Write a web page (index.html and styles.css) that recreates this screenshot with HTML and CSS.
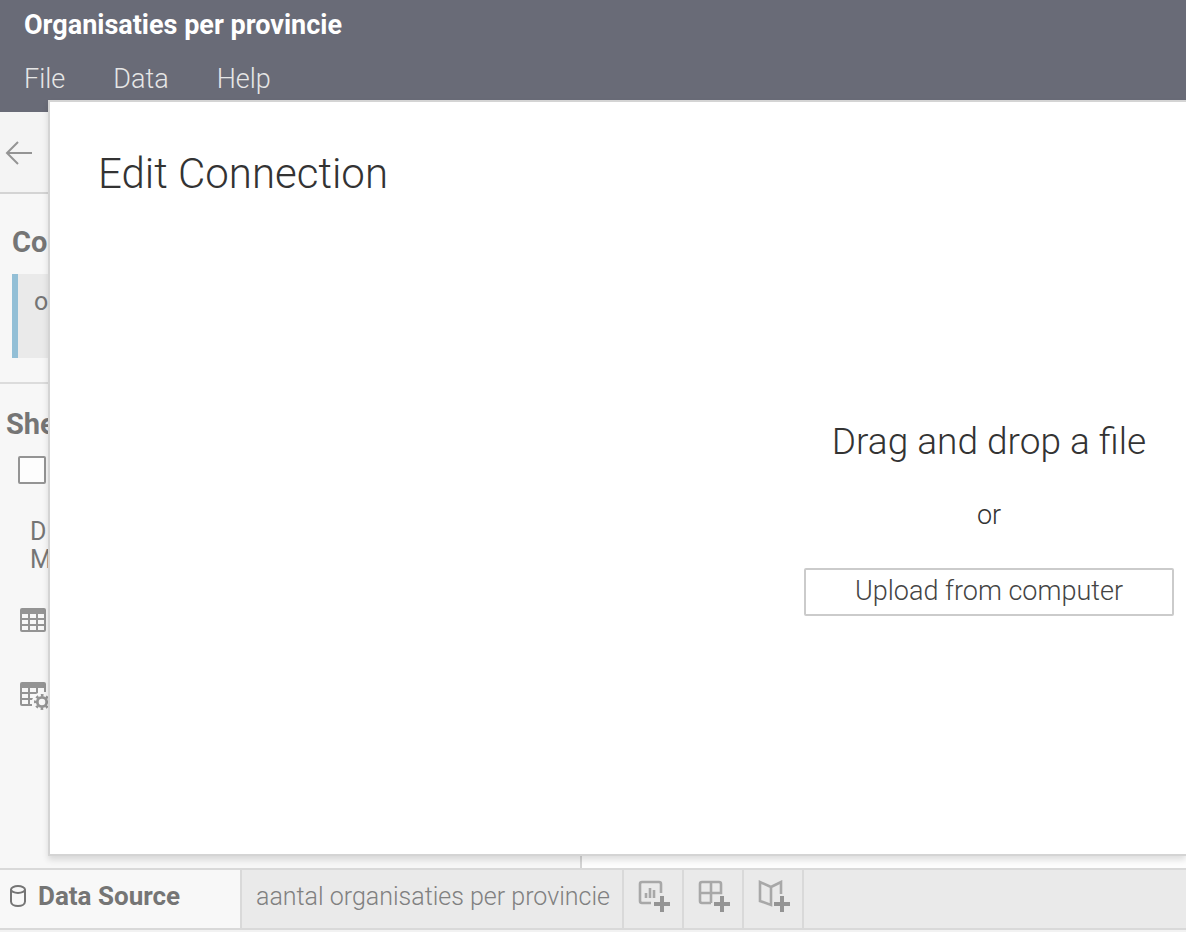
FILE: index.html
```html
<!DOCTYPE html>
<html lang="en">
<head>
  <meta charset="utf-8">
  <meta name="viewport" content="width=device-width, initial-scale=1">
  <title>Organisaties per provincie</title>
  <link rel="stylesheet" href="styles.css">
</head>
<body>

  <header class="topbar">
    <h1>Organisaties per provincie</h1>
    <nav class="menu">
      <button type="button">File</button>
      <button type="button">Data</button>
      <button type="button">Help</button>
    </nav>
  </header>

  <div class="workspace">
    <aside class="sidebar">
      <div class="back-row">
        <button type="button" class="back" aria-label="Back">
          <svg width="28" height="24" viewBox="0 0 28 24" fill="none" stroke="#949494" stroke-width="2">
            <path d="M27 12H2M13 1L2 12l11 11"/>
          </svg>
        </button>
      </div>

      <section class="connections">
        <h2>Co</h2>
        <div class="connection">o</div>
      </section>

      <section class="sheets">
        <h2>She</h2>
        <input type="checkbox" class="interpreter" aria-label="Data Interpreter">
        <p class="hint">D<br>M</p>
        <!-- sheet -->
        <svg class="sheet-icon" width="30" height="30" viewBox="0 0 30 30">
          <path fill="#949494" fill-rule="evenodd" d="M2 0h22q2 0 2 2v20q0 2-2 2H2q-2 0-2-2V2Q0 0 2 0zM2 6v4h6V6zM10 6v4h6V6zM18 6v4h6V6zM2 12v4h6v-4zM10 12v4h6v-4zM18 12v4h6v-4zM2 18v4h6v-4zM10 18v4h6v-4zM18 18v4h6v-4z"/>
        </svg>
        <!-- custom SQL -->
        <svg class="sheet-icon" width="30" height="30" viewBox="0 0 30 30">
          <path fill="#949494" fill-rule="evenodd" d="M2 0h22q2 0 2 2v8h-2V6h-6v5l-2 1h-6v4h3l-1 2h-2v4h2v2H2q-2 0-2-2V2Q0 0 2 0zM2 6v4h6V6zM10 6v4h6V6zM2 12v4h6v-4zM2 18v4h6v-4z"/>
          <circle cx="22" cy="20" r="4.7" fill="none" stroke="#949494" stroke-width="2.8"/>
          <circle cx="22" cy="20" r="6.7" fill="none" stroke="#949494" stroke-width="2.6" stroke-dasharray="2.6 2.66" stroke-dashoffset="1.3"/>
        </svg>
      </section>
    </aside>
    <main class="canvas"></main>
  </div>

  <footer class="tabs">
    <button type="button" class="tab active">
      <svg width="18" height="24" viewBox="0 0 18 24" fill="none" stroke="#757575" stroke-width="2">
        <ellipse cx="9" cy="5.5" rx="7" ry="3.5"/>
        <path d="M2 5.5v12c0 6 14 6 14 0v-12"/>
      </svg>
      Data Source
    </button>
    <button type="button" class="tab">aantal organisaties per provincie</button>
    <button type="button" class="tab icon" aria-label="New Worksheet">
      <svg width="32" height="32" viewBox="0 0 32 32" fill="none" stroke="#a8a8a8" stroke-width="2.6">
        <path d="M13 23H4q-2 0-2-2V4q0-2 2-2h17q2 0 2 2v9"/>
        <path d="M8 13v5M12 8v10M16 10v8"/>
        <path stroke="#949494" stroke-width="4" d="M24 16v16M16 24h16"/>
      </svg>
    </button>
    <button type="button" class="tab icon" aria-label="New Dashboard">
      <svg width="32" height="32" viewBox="0 0 32 32" fill="none" stroke="#a8a8a8" stroke-width="2.6">
        <path d="M13 23H4q-2 0-2-2V4q0-2 2-2h17q2 0 2 2v9H2M13 2v21"/>
        <path stroke="#949494" stroke-width="4" d="M24 16v16M16 24h16"/>
      </svg>
    </button>
    <button type="button" class="tab icon" aria-label="New Story">
      <svg width="32" height="32" viewBox="0 0 32 32" fill="none" stroke="#a8a8a8" stroke-width="2.6">
        <path d="M23 14V2l-10 5L2 2v19l11 4V7"/>
        <path stroke="#949494" stroke-width="4" d="M24 16v16M16 24h16"/>
      </svg>
    </button>
  </footer>

  <div class="dialog" role="dialog" aria-labelledby="dialog-title">
    <h2 id="dialog-title">Edit Connection</h2>
    <div class="dropzone">
      <p class="drop-title">Drag and drop a file</p>
      <p class="or">or</p>
      <button type="button" class="upload">Upload from computer</button>
    </div>
  </div>

</body>
</html>
```
FILE: styles.css
```css
* {
  box-sizing: border-box;
  margin: 0;
  padding: 0;
}

body {
  position: relative;
  display: flex;
  flex-direction: column;
  height: 100vh;
  overflow: hidden;
  background-color: #f7f7f7;
  color: #333;
  font-family: Roboto, "Liberation Sans", sans-serif;
  font-size: 27px;
  font-weight: 300;
}

button {
  border: none;
  background: none;
  color: inherit;
  font: inherit;
}

svg {
  display: block;
}

/* Top bar */
.topbar {
  height: 112px;
  padding: 8px 24px;
  background-color: #696b77;
  color: #fff;
}

.topbar h1 {
  font-size: 27px;
  font-weight: 700;
  line-height: 34px;
}

.menu {
  display: flex;
  gap: 48px;
  margin-top: 20px;
  color: #e6e6e6;
  line-height: 34px;
}

/* Sidebar */
.workspace {
  display: flex;
  flex: 1;
  min-height: 0;
}

.sidebar {
  width: 582px;
  border-right: 2px solid #d4d4d4;
  color: #757575;
}

.canvas {
  flex: 1;
  background-color: #fdfdfd;
}

.back-row {
  display: flex;
  align-items: center;
  height: 82px;
  padding: 2px 0 0 5px;
  border-bottom: 2px solid #d4d4d4;
  background-color: #f4f4f4;
}

.sidebar h2 {
  font-size: 29px;
  font-weight: 700;
  line-height: 32px;
}

.connections {
  padding: 32px 0 24px 12px;
  border-bottom: 2px solid #dcdcdc;
}

.connection {
  height: 84px;
  margin-top: 16px;
  padding: 12px 16px;
  border-left: 6px solid #93bfd6;
  background-color: #eaeaea;
  font-size: 25px;
  font-weight: 400;
  line-height: 32px;
}

.sheets {
  padding: 24px 6px;
}

.interpreter {
  display: block;
  width: 28px;
  height: 28px;
  margin: 16px 12px 34px;
  appearance: none;
  border: 2px solid #949494;
  border-radius: 2px;
  background-color: #fdfdfd;
}

.hint {
  margin: 0 24px 34px;
  font-size: 25px;
  font-weight: 400;
  line-height: 28px;
}

.sheet-icon {
  margin: 0 14px 44px;
}

/* Bottom tabs */
.tabs {
  display: flex;
  height: 64px;
  border-top: 2px solid #d9d9d9;
  border-bottom: 2px solid #f2f2f2;
  background-color: #eaeaea;
  box-shadow: inset 0 -2px #d9d9d9;
}

.tab {
  display: flex;
  align-items: center;
  height: 58px;
  padding: 0 12px 6px 14px;
  border-right: 2px solid #d9d9d9;
  color: #808080;
  font-size: 25px;
}

.tab.active {
  gap: 11px;
  width: 242px;
  padding-left: 9px;
  background-color: #f8f8f8;
  color: #757575;
  font-size: 26px;
  font-weight: 700;
}

.tab.icon {
  width: 60px;
}

/* Dialog */
.dialog {
  position: absolute;
  top: 100px;
  right: 0;
  bottom: 76px;
  left: 48px;
  display: flex;
  flex-direction: column;
  padding: 48px 12px 48px 48px;
  border: 2px solid #d4d4d4;
  border-right: none;
  background-color: #fff;
  box-shadow: 0 4px 6px rgba(0, 0, 0, 0.12);
}

.dialog h2 {
  font-size: 42px;
  font-weight: 300;
  line-height: 48px;
}

.dropzone {
  display: flex;
  flex: 1;
  flex-direction: column;
  align-items: center;
  align-self: flex-end;
  justify-content: center;
  padding-top: 30px;
}

.drop-title {
  font-size: 37px;
  line-height: 48px;
}

.or {
  margin: 32px 0 36px;
  line-height: 34px;
}

.upload {
  width: 370px;
  height: 48px;
  padding-bottom: 2px;
  border: 2px solid #cbcbcb;
  border-radius: 2px;
  color: #444;
}
```
